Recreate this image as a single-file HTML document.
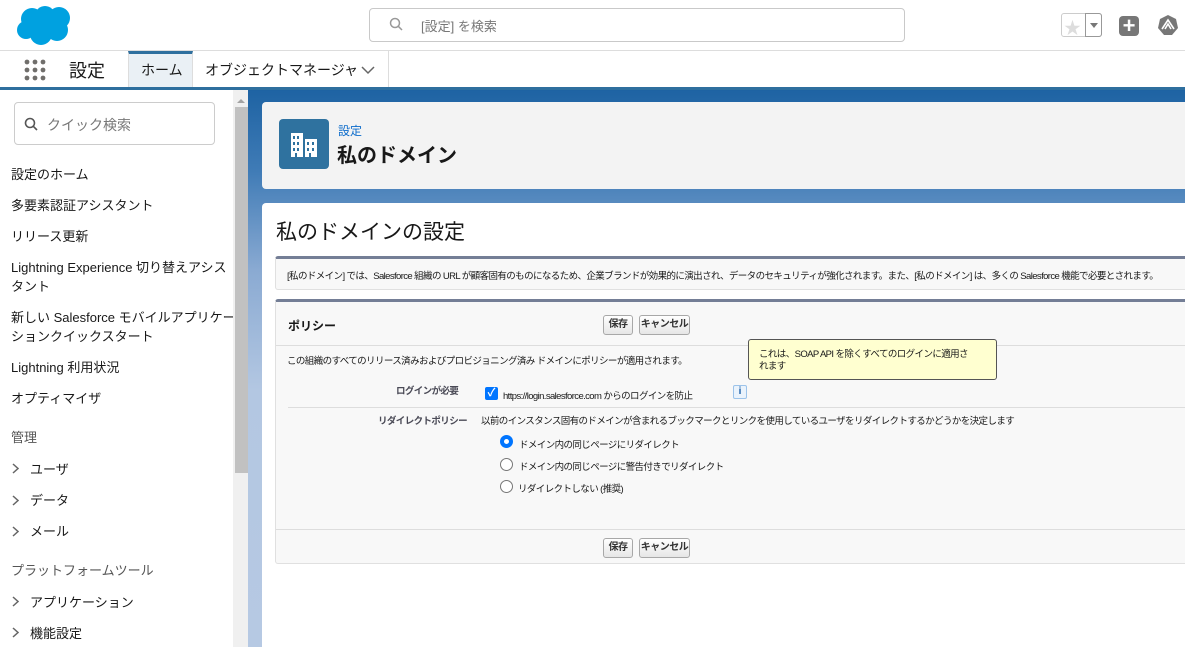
<!DOCTYPE html>
<html><head><meta charset="utf-8"><style>
*{box-sizing:border-box;margin:0;padding:0}
body{width:1185px;height:647px;overflow:hidden;position:relative;background:#fff;font-family:"Liberation Sans","Noto Sans CJK JP",sans-serif;color:#181818}
.a{position:absolute}
.side div.i{position:absolute;left:11px;font-size:13px;color:#181818;white-space:nowrap}
.chev{position:absolute;left:12px}
.btn{position:absolute;height:20px;border:1px solid #a8a8a8;border-radius:3px;background:linear-gradient(#fff,#e6e6e6);font-size:10px;font-weight:bold;line-height:18px;text-align:center;color:#333;letter-spacing:-0.5px}
.sm{font-size:9.5px;letter-spacing:-0.6px;white-space:nowrap}
.radio{position:absolute;width:13px;height:13px;border:1px solid #777;border-radius:50%;background:#fff}
</style></head><body>
<div style="position:absolute;left:0;top:0;width:1185px;height:647px;overflow:hidden">
<svg class="a" style="left:15px;top:4px" width="60" height="42" viewBox="0 0 60 42"><g fill="#00a1e0"><circle cx="17" cy="15" r="11"/><circle cx="30" cy="12" r="10"/><circle cx="44" cy="14" r="11"/><circle cx="11" cy="26" r="9"/><circle cx="26" cy="30" r="11"/><circle cx="42" cy="26" r="11"/><rect x="10" y="14" width="40" height="18"/></g></svg>
<div class="a" style="left:369px;top:8px;width:536px;height:34px;border:1px solid #c9c9c9;border-radius:4px"></div>
<svg class="a" style="left:389px;top:17px" width="14" height="14" viewBox="0 0 14 14"><circle cx="6" cy="6" r="4.5" fill="none" stroke="#999" stroke-width="1.5"/><line x1="9.3" y1="9.3" x2="13" y2="13" stroke="#999" stroke-width="1.5"/></svg>
<div class="a" style="left:421px;top:16px;font-size:13px;color:#777">[設定] を検索</div>
<div class="a" style="left:1061px;top:13px;width:41px;height:24px;border:1px solid #ccc;border-radius:3px"></div>
<div class="a" style="left:1085px;top:13px;width:17px;height:24px;border:1px solid #999;border-radius:0 3px 3px 0"></div>
<div class="a" style="left:1064px;top:14px;font-size:17px;color:#ddd">★</div>
<div class="a" style="left:1090px;top:23px;border:4px solid transparent;border-top:5px solid #777"></div>
<div class="a" style="left:1119px;top:16px;width:20px;height:20px;background:#777;border-radius:4px;color:#fff;font-size:22px;line-height:19px;text-align:center;font-weight:bold">+</div>
<svg class="a" style="left:1157px;top:14px" width="22" height="22" viewBox="0 0 22 22"><path d="M11 1 L19 5 L21 14 L15 21 L7 21 L1 14 L3 5Z" fill="#777"/><path d="M5 15 L11 6 L17 15 M8 15 L11 10 L14 15" fill="none" stroke="#fff" stroke-width="1.6"/></svg>
<div class="a" style="left:0;top:50px;width:1185px;height:1px;background:#ddd"></div>
<svg class="a" style="left:24px;top:59px" width="22" height="22"><g fill="#706e6b"><circle cx="3" cy="3" r="2.4"/><circle cx="11" cy="3" r="2.4"/><circle cx="19" cy="3" r="2.4"/><circle cx="3" cy="11" r="2.4"/><circle cx="11" cy="11" r="2.4"/><circle cx="19" cy="11" r="2.4"/><circle cx="3" cy="19" r="2.4"/><circle cx="11" cy="19" r="2.4"/><circle cx="19" cy="19" r="2.4"/></g></svg>
<div class="a" style="left:69px;top:57px;font-size:18px">設定</div>
<div class="a" style="left:128px;top:51px;width:65px;height:36px;background:#eaf0f5;border-top:3px solid #2e6f9e;border-left:1px solid #ddd;border-right:1px solid #ddd"></div>
<div class="a" style="left:141px;top:60px;font-size:14px">ホーム</div>
<div class="a" style="left:205px;top:60px;font-size:14px">オブジェクトマネージャ</div>
<svg class="a" style="left:361px;top:66px" width="14" height="9"><path d="M1 1 L7 7 L13 1" fill="none" stroke="#666" stroke-width="1.5"/></svg>
<div class="a" style="left:388px;top:51px;width:1px;height:36px;background:#ddd"></div>
<div class="a" style="left:0;top:87px;width:1185px;height:3px;background:#2e6f9e"></div>
<div class="a" style="left:248px;top:90px;width:937px;height:557px;background:linear-gradient(#1e63a3 0px,#3f7bb6 80px,#8aaad2 180px,#b3c7e2 300px,#b6c9e3 557px)"></div>
<div class="a side" style="left:0;top:90px;width:233px;height:557px;background:#fff;overflow:hidden">
<div class="a" style="left:14px;top:12px;width:201px;height:43px;border:1px solid #ccc;border-radius:4px"></div>
<svg class="a" style="left:24px;top:27px" width="14" height="14"><circle cx="6" cy="6" r="4.5" fill="none" stroke="#555" stroke-width="1.6"/><line x1="9.3" y1="9.3" x2="13" y2="13" stroke="#555" stroke-width="1.6"/></svg>
<div class="a" style="left:47px;top:25px;font-size:14px;color:#777">クイック検索</div>
<div class="i" style="top:74px">設定のホーム</div>
<div class="i" style="top:105px">多要素認証アシスタント</div>
<div class="i" style="top:136px">リリース更新</div>
<div class="i" style="top:167px">Lightning Experience 切り替えアシス</div>
<div class="i" style="top:186px">タント</div>
<div class="i" style="top:217px">新しい Salesforce モバイルアプリケー</div>
<div class="i" style="top:236px">ションクイックスタート</div>
<div class="i" style="top:267px">Lightning 利用状況</div>
<div class="i" style="top:298px">オプティマイザ</div>
<div class="i" style="top:337px;color:#555">管理</div>
<svg class="chev" style="top:373px" width="7" height="11"><path d="M1 1 L6 5.5 L1 10" fill="none" stroke="#666" stroke-width="1.5"/></svg><div class="i" style="left:30px;top:369px">ユーザ</div>
<svg class="chev" style="top:405px" width="7" height="11"><path d="M1 1 L6 5.5 L1 10" fill="none" stroke="#666" stroke-width="1.5"/></svg><div class="i" style="left:30px;top:400px">データ</div>
<svg class="chev" style="top:436px" width="7" height="11"><path d="M1 1 L6 5.5 L1 10" fill="none" stroke="#666" stroke-width="1.5"/></svg><div class="i" style="left:30px;top:431px">メール</div>
<div class="i" style="top:470px;color:#555">プラットフォームツール</div>
<svg class="chev" style="top:506px" width="7" height="11"><path d="M1 1 L6 5.5 L1 10" fill="none" stroke="#666" stroke-width="1.5"/></svg><div class="i" style="left:30px;top:502px">アプリケーション</div>
<svg class="chev" style="top:537px" width="7" height="11"><path d="M1 1 L6 5.5 L1 10" fill="none" stroke="#666" stroke-width="1.5"/></svg><div class="i" style="left:30px;top:533px">機能設定</div>
</div>
<div class="a" style="left:233px;top:90px;width:15px;height:557px;background:#f0f0f0"></div>
<div class="a" style="left:235px;top:107px;width:13px;height:366px;background:#c1c1c1"></div>
<div class="a" style="left:237px;top:95px;border:4px solid transparent;border-bottom:4px solid #a3a3a3"></div>
<div class="a" style="left:262px;top:102px;width:930px;height:87px;background:#f3f3f3;border-radius:4px"></div>
<div class="a" style="left:279px;top:119px;width:50px;height:50px;background:#2f729f;border-radius:4px"></div>
<svg class="a" style="left:290px;top:132px" width="28" height="26" viewBox="0 0 28 26"><g fill="#fff"><rect x="1" y="1" width="12" height="24"/><rect x="15" y="7" width="12" height="18"/></g><g fill="#2f729f"><rect x="3" y="4" width="2" height="3"/><rect x="7" y="4" width="2" height="3"/><rect x="3" y="10" width="2" height="3"/><rect x="7" y="10" width="2" height="3"/><rect x="3" y="16" width="2" height="3"/><rect x="7" y="16" width="2" height="3"/><rect x="5" y="21" width="2" height="4"/><rect x="17" y="10" width="2" height="3"/><rect x="22" y="10" width="2" height="3"/><rect x="17" y="16" width="2" height="3"/><rect x="22" y="16" width="2" height="3"/><rect x="19" y="21" width="2" height="4"/></g></svg>
<div class="a" style="left:338px;top:122px;font-size:12px;color:#0b6bcb">設定</div>
<div class="a" style="left:337px;top:139px;font-size:20px;font-weight:bold">私のドメイン</div>
<div class="a" style="left:262px;top:203px;width:930px;height:450px;background:#fff;border-radius:4px"></div>
<div class="a" style="left:276px;top:216px;font-size:21px">私のドメインの設定</div>
<div class="a" style="left:275px;top:256px;width:915px;height:34px;background:#f8f8f8;border:1px solid #e0e0e0;border-top:3px solid #747e96;border-radius:3px"></div>
<div class="a sm" style="left:287px;top:268px">[私のドメイン] では、Salesforce 組織の URL が顧客固有のものになるため、企業ブランドが効果的に演出され、データのセキュリティが強化されます。また、[私のドメイン] は、多くの Salesforce 機能で必要とされます。</div>
<div class="a" style="left:275px;top:299px;width:915px;height:265px;background:#f8f8f8;border:1px solid #e0e0e0;border-top:3px solid #747e96;border-radius:3px"></div>
<div class="a" style="left:288px;top:317px;font-size:12px;font-weight:bold">ポリシー</div>
<div class="btn" style="left:603px;top:315px;width:30px">保存</div>
<div class="btn" style="left:639px;top:315px;width:51px">キャンセル</div>
<div class="a" style="left:276px;top:345px;width:914px;height:1px;background:#ddd"></div>
<div class="a sm" style="left:287px;top:353px">この組織のすべてのリリース済みおよびプロビジョニング済み ドメインにポリシーが適用されます。</div>
<div class="a sm" style="left:396px;top:383px;font-weight:bold;color:#4a4a56">ログインが必要</div>
<div class="a" style="left:485px;top:387px;width:13px;height:13px;background:#0075ff;border-radius:2px;color:#fff;font-size:11px;line-height:13px;text-align:center;font-weight:bold">✓</div>
<div class="a sm" style="left:503px;top:388px">https://login.salesforce.com からのログインを防止</div>
<div class="a" style="left:733px;top:385px;width:14px;height:14px;border:1px solid #9cc3ea;background:#eaf3fc;border-radius:2px;font-size:10px;color:#1b5fa8;text-align:center;line-height:12px;font-weight:bold">i</div>
<div class="a" style="left:748px;top:339px;width:249px;height:41px;background:#ffffd0;border:1px solid #555;border-radius:3px"></div>
<div class="a sm" style="left:759px;top:349px;line-height:12px">これは、SOAP API を除くすべてのログインに適用さ<br>れます</div>
<div class="a" style="left:288px;top:407px;width:902px;height:1px;background:#ddd"></div>
<div class="a sm" style="left:378px;top:413px;font-weight:bold;color:#4a4a56">リダイレクトポリシー</div>
<div class="a sm" style="left:481px;top:413px">以前のインスタンス固有のドメインが含まれるブックマークとリンクを使用しているユーザをリダイレクトするかどうかを決定します</div>
<div class="radio" style="left:500px;top:435px;border:4px solid #0075ff"></div>
<div class="a sm" style="left:519px;top:437px">ドメイン内の同じページにリダイレクト</div>
<div class="radio" style="left:500px;top:458px"></div>
<div class="a sm" style="left:519px;top:459px">ドメイン内の同じページに警告付きでリダイレクト</div>
<div class="radio" style="left:500px;top:480px"></div>
<div class="a sm" style="left:518px;top:481px">リダイレクトしない (推奨)</div>
<div class="a" style="left:276px;top:529px;width:914px;height:1px;background:#ddd"></div>
<div class="btn" style="left:603px;top:538px;width:30px">保存</div>
<div class="btn" style="left:639px;top:538px;width:51px">キャンセル</div>
</div>
</body></html>
